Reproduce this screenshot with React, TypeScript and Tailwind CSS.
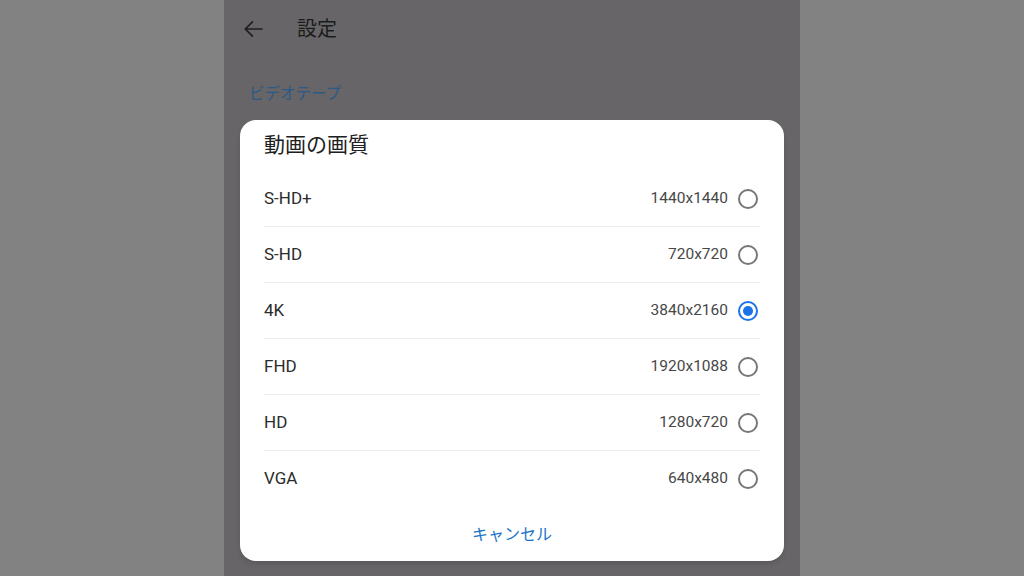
import React from "react";

const options = [
  { label: "S-HD+", res: "1440x1440", selected: false },
  { label: "S-HD", res: "720x720", selected: false },
  { label: "4K", res: "3840x2160", selected: true },
  { label: "FHD", res: "1920x1088", selected: false },
  { label: "HD", res: "1280x720", selected: false },
  { label: "VGA", res: "640x480", selected: false },
];

const font = { fontFamily: 'Roboto, "Noto Sans CJK JP", sans-serif' };

const Radio = ({ on }: { on: boolean }) =>
  on ? (
    <div className="mr-[2px] flex h-5 w-5 items-center justify-center rounded-full border-2 border-[#1a73e8]">
      <div className="h-[10px] w-[10px] rounded-full bg-[#1a73e8]" />
    </div>
  ) : (
    <div className="mr-[2px] h-5 w-5 rounded-full border-2 border-[#777777]" />
  );

export default function App() {
  return (
    <div className="flex h-[576px] w-[1024px] justify-center bg-[#828282]" style={font}>
      <div className="relative h-full w-[576px] bg-[#676568]">
        {/* App bar */}
        <div className="flex h-[58px] items-center pl-[17px]">
          <svg width="26" height="26" viewBox="0 0 24 24" fill="none" stroke="#1f1f1f" strokeWidth="1.6">
            <path d="M20 12H4M11 5l-7 7 7 7" />
          </svg>
          <span className="ml-[30px] text-[20px] text-[#1c1c1c]">設定</span>
        </div>
        <div className="px-[25px] pt-[25px] text-[15.5px] text-[#2a5a86]">ビデオテープ</div>

        {/* Dialog */}
        <div className="absolute left-4 top-[120px] w-[544px] rounded-[16px] bg-white shadow-md">
          <div className="flex h-[51px] items-center px-6 pt-[1px] text-[21px] text-[#202020]">
            動画の画質
          </div>
          <div className="px-6">
            {options.map((o, i) => (
              <div key={o.label}>
                {i > 0 && <div className="h-px bg-[#ececec]" />}
                <div className="flex h-[55px] items-center">
                  <span className="flex-1 text-[17px] text-[#2c2c2c]">{o.label}</span>
                  <span className="mr-[10px] text-[15.5px] text-[#474747]">{o.res}</span>
                  <Radio on={o.selected} />
                </div>
              </div>
            ))}
          </div>
          <div className="flex h-[55px] items-center justify-center pt-[3px] text-[16px] text-[#1a73c9]">
            キャンセル
          </div>
        </div>
      </div>
    </div>
  );
}
